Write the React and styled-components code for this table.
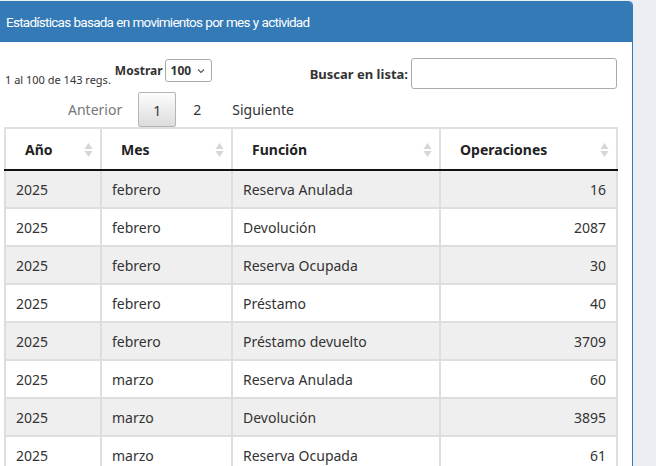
import React from "react";
import styled, { createGlobalStyle } from "styled-components";

const Global = createGlobalStyle`
  html, body { margin: 0; padding: 0; background: #ebeef3; }
  body { font-family: "Noto Sans", "Open Sans", sans-serif; color: #333; overflow: hidden; }
`;

const Panel = styled.div`
  width: 634px;
  margin: 1px 0 0 -1px;
  background: #fff;
  border: 1px solid #337ab7;
  border-top-right-radius: 4px;
  height: 480px;
  box-sizing: border-box;
`;

const PanelHeading = styled.div`
  height: 40px;
  background: #337ab7;
  color: #fff;
  font-family: Roboto, "Noto Sans", sans-serif;
  font-size: 13.5px;
  letter-spacing: -0.75px;
  word-spacing: 0.5px;
  display: flex;
  align-items: center;
  padding: 0 6px;
  border-top-right-radius: 3px;
`;

const Body = styled.div`
  padding: 16px 15px 0 5px;
`;

const Controls = styled.div`
  display: flex;
  align-items: flex-start;
  height: 33px;
`;

const Info = styled.div`
  font-size: 11px;
  margin-top: 14px;
  white-space: nowrap;
`;

const Length = styled.label`
  display: flex;
  align-items: flex-start;
  font-size: 12px;
  font-weight: 700;
  margin-left: 4px;
  span { margin-top: 4px; }
`;

const SelectBox = styled.div`
  margin-top: 1px;
  margin-left: 2px;
  width: 47px;
  height: 23px;
  border: 1px solid #aaa;
  border-radius: 3px;
  display: flex;
  align-items: center;
  justify-content: space-between;
  padding: 0 6px 0 5px;
  box-sizing: border-box;
  font-weight: 700;
  font-size: 12px;
`;

const Search = styled.label`
  margin-left: auto;
  display: flex;
  align-items: center;
  font-size: 13px;
  font-weight: 700;
  gap: 3px;
`;

const SearchInput = styled.div`
  width: 206px;
  height: 31px;
  box-sizing: border-box;
  border: 1px solid #aaa;
  border-radius: 3px;
  background: #fff;
`;

const Pager = styled.div`
  display: flex;
  align-items: center;
  height: 36px;
  padding-left: 63px;
  font-size: 14px;
`;

const PageLink = styled.div`
  margin-right: ${(p) => p.$gap || 0}px;
  color: ${(p) => (p.$disabled ? "#777" : "#333")};
  text-align: center;
  height: 35px;
  line-height: 35px;
  box-sizing: border-box;
  ${(p) =>
    p.$active &&
    `
    border: 1px solid #b5b5b5;
    border-radius: 2px;
    background: linear-gradient(#fdfdfd, #dcdcdc);
    width: 38px;
  `}
`;

const Table = styled.table`
  border-collapse: collapse;
  width: 613px;
  table-layout: fixed;
  font-size: 14px;
  margin-left: -1px;
`;

const Th = styled.th`
  position: relative;
  height: 40px;
  text-align: left;
  font-weight: 700;
  padding: 0 18px 0 19px;
  border: 2px solid #e0e0e0;
  border-bottom: 2px solid #111;
  color: #222;
`;

const Td = styled.td`
  height: 36px;
  padding: 0 10px;
  border: 2px solid #dedede;
  text-align: ${(p) => (p.$num ? "right" : "left")};
  white-space: nowrap;
`;

const Tr = styled.tr`
  background: ${(p) => (p.$odd ? "#efefef" : "#fff")};
`;

const SortIcon = styled.svg`
  position: absolute;
  right: 7px;
  top: 13px;
`;

const Sort = () => (
  <SortIcon width="9" height="16" viewBox="0 0 9 16">
    <path d="M4.5 1 L8.5 7 L0.5 7 Z" fill="#d6d6d6" />
    <path d="M4.5 15 L8.5 9 L0.5 9 Z" fill="#d6d6d6" />
  </SortIcon>
);

const rows = [
  ["2025", "febrero", "Reserva Anulada", "16"],
  ["2025", "febrero", "Devolución", "2087"],
  ["2025", "febrero", "Reserva Ocupada", "30"],
  ["2025", "febrero", "Préstamo", "40"],
  ["2025", "febrero", "Préstamo devuelto", "3709"],
  ["2025", "marzo", "Reserva Anulada", "60"],
  ["2025", "marzo", "Devolución", "3895"],
  ["2025", "marzo", "Reserva Ocupada", "61"],
];

const cols = [
  ["Año", 96],
  ["Mes", 131],
  ["Función", 208],
  ["Operaciones", 177],
];

export default function App() {
  return (
    <>
      <Global />
      <Panel>
        <PanelHeading>Estadísticas basada en movimientos por mes y actividad</PanelHeading>
        <Body>
          <Controls>
            <Info>1 al 100 de 143 regs.</Info>
            <Length>
              <span>Mostrar</span>
              <SelectBox>
                100
                <svg width="8" height="6" viewBox="0 0 8 6">
                  <path d="M1 1.5 L4 4.5 L7 1.5" fill="none" stroke="#555" strokeWidth="1.1" />
                </svg>
              </SelectBox>
            </Length>
            <Search>
              Buscar en lista:
              <SearchInput />
            </Search>
          </Controls>
          <Pager>
            <PageLink $disabled $gap={16}>Anterior</PageLink>
            <PageLink $active $gap={17}>1</PageLink>
            <PageLink $gap={31}>2</PageLink>
            <PageLink>Siguiente</PageLink>
          </Pager>
          <Table>
            <colgroup>
              {cols.map(([n, w]) => (
                <col key={n} style={{ width: w }} />
              ))}
            </colgroup>
            <thead>
              <tr>
                {cols.map(([n]) => (
                  <Th key={n}>
                    {n}
                    <Sort />
                  </Th>
                ))}
              </tr>
            </thead>
            <tbody>
              {rows.map((r, i) => (
                <Tr key={i} $odd={i % 2 === 0}>
                  <Td>{r[0]}</Td>
                  <Td>{r[1]}</Td>
                  <Td>{r[2]}</Td>
                  <Td $num>{r[3]}</Td>
                </Tr>
              ))}
            </tbody>
          </Table>
        </Body>
      </Panel>
    </>
  );
}
